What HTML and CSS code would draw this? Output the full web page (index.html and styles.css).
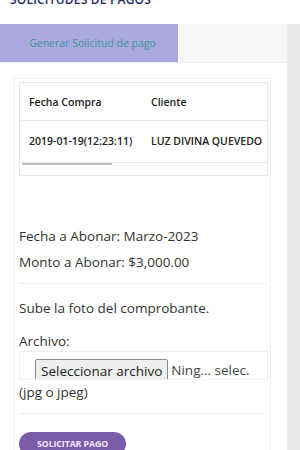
FILE: index.html
```html
<!DOCTYPE html>
<html lang="es">
<head>
<meta charset="utf-8">
<link rel="stylesheet" href="styles.css">
</head>
<body>
<h1 class="title">SOLICITUDES DE PAGOS</h1>
<div class="panel">
  <div class="main">
    <div class="tabs">
      <div class="tab">Generar Solicitud de pago</div>
    </div>
    <div class="content">
      <div class="card">
        <div class="table-wrap">
          <table class="grid">
            <tr class="head"><th class="c1">Fecha Compra</th><th class="c2">Cliente</th></tr>
            <tr class="row"><td class="c1">2019-01-19(12:23:11)</td><td class="c2">LUZ DIVINA QUEVEDO</td></tr>
          </table>
          <div class="hscroll"><div class="thumb"></div></div>
        </div>
        <div class="info">
          <p class="line">Fecha a Abonar: Marzo-2023</p>
          <p class="line">Monto a Abonar: $3,000.00</p>
        </div>
        <hr class="sep">
        <p class="line">Sube la foto del comprobante.</p>
        <p class="label">Archivo:</p>
        <div class="filebox">
          <span class="filebtn">Seleccionar archivo</span><span class="filename">Ning... selec.</span>
        </div>
        <p class="hint">(jpg o jpeg)</p>
        <hr class="sep sep2">
        <div class="actions"><span class="submit">SOLICITAR PAGO</span></div>
      </div>
    </div>
  </div>
  <div class="vscroll"></div>
</div>
</body>
</html>
```
FILE: styles.css
```css
html, body { margin: 0; padding: 0; background: #fff; }
body { font-family: "Open Sans", "Liberation Sans", sans-serif; color: #333; width: 300px; height: 450px; overflow: hidden; }
.title { margin: -8px 0 0 0; padding-left: 10px; font-size: 12px; font-weight: 600; line-height: 16px; color: #1d2b66; letter-spacing: 0.2px; }
.panel { display: flex; margin-top: 16px; height: 500px; }
.main { width: 287px; display: flex; flex-direction: column; }
.vscroll { width: 13px; background: #ebebeb; }
.tabs { height: 38px; background: #f6f6f6; display: flex; border-bottom: 1px solid #eeeeee; }
.tab { width: 178px; background: #aba8dd; color: #3a979c; font-size: 10.5px; display: flex; align-items: center; justify-content: center; padding-left: 7px; box-sizing: border-box; }
.content { flex: 1; background: #fff; padding: 15px 16px 0 14px; }
.card { border: 1px solid #efefef; border-bottom: none; padding: 3px 2px 0 4px; }
.table-wrap { width: 249px; }
.grid { border-collapse: collapse; width: 249px; border: 1px solid #e6e6e6; font-size: 10.5px; font-weight: 600; color: #222; }
.grid th, .grid td { text-align: left; padding: 0; white-space: nowrap; }
.head { height: 38px; }
.head th { font-weight: 600; border-bottom: 1px solid #e6e6e6; }
.row { height: 42px; vertical-align: top; }
.row td { padding-top: 13px; }
.c1 { padding-left: 9px !important; width: 122px; }
.hscroll { height: 12px; border: 1px solid #e6e6e6; border-top: none; padding-left: 2px; }
.thumb { width: 90px; height: 2px; background: #bdbdbd; margin-top: 0px; }
.info { margin-top: 47px; }
.line { margin: 0; font-size: 13.5px; line-height: 26px; }
.sep { border: none; border-top: 1px solid #ececec; margin: 8px 2px 11px 0; }
.label { margin: 10px 0 0; font-size: 13.5px; line-height: 20px; }
.filebox { height: 29px; border: 1px solid #f0f0f0; box-sizing: border-box; padding: 7px 0 0 15px; overflow: hidden; width: 249px; display: flex; align-items: flex-start; font-size: 13.5px; }
.filebtn { display: inline-block; background: #efefef; border: 1px solid #8a8a8a; border-radius: 2px; padding: 0 5px; line-height: 22px; color: #222; white-space: nowrap; }
.filename { padding-left: 3px; line-height: 22px; color: #444; white-space: nowrap; }
.hint { margin: 0; font-size: 13.5px; line-height: 24px; }
.sep2 { margin: 9px 2px 18px 0; }
.actions { display: flex; }
.submit { background: #7b5ca8; color: #efe7fb; font-size: 8.8px; font-weight: 700; border-radius: 12px; padding: 0 18px; height: 24px; line-height: 24px; letter-spacing: -0.1px; }
```
